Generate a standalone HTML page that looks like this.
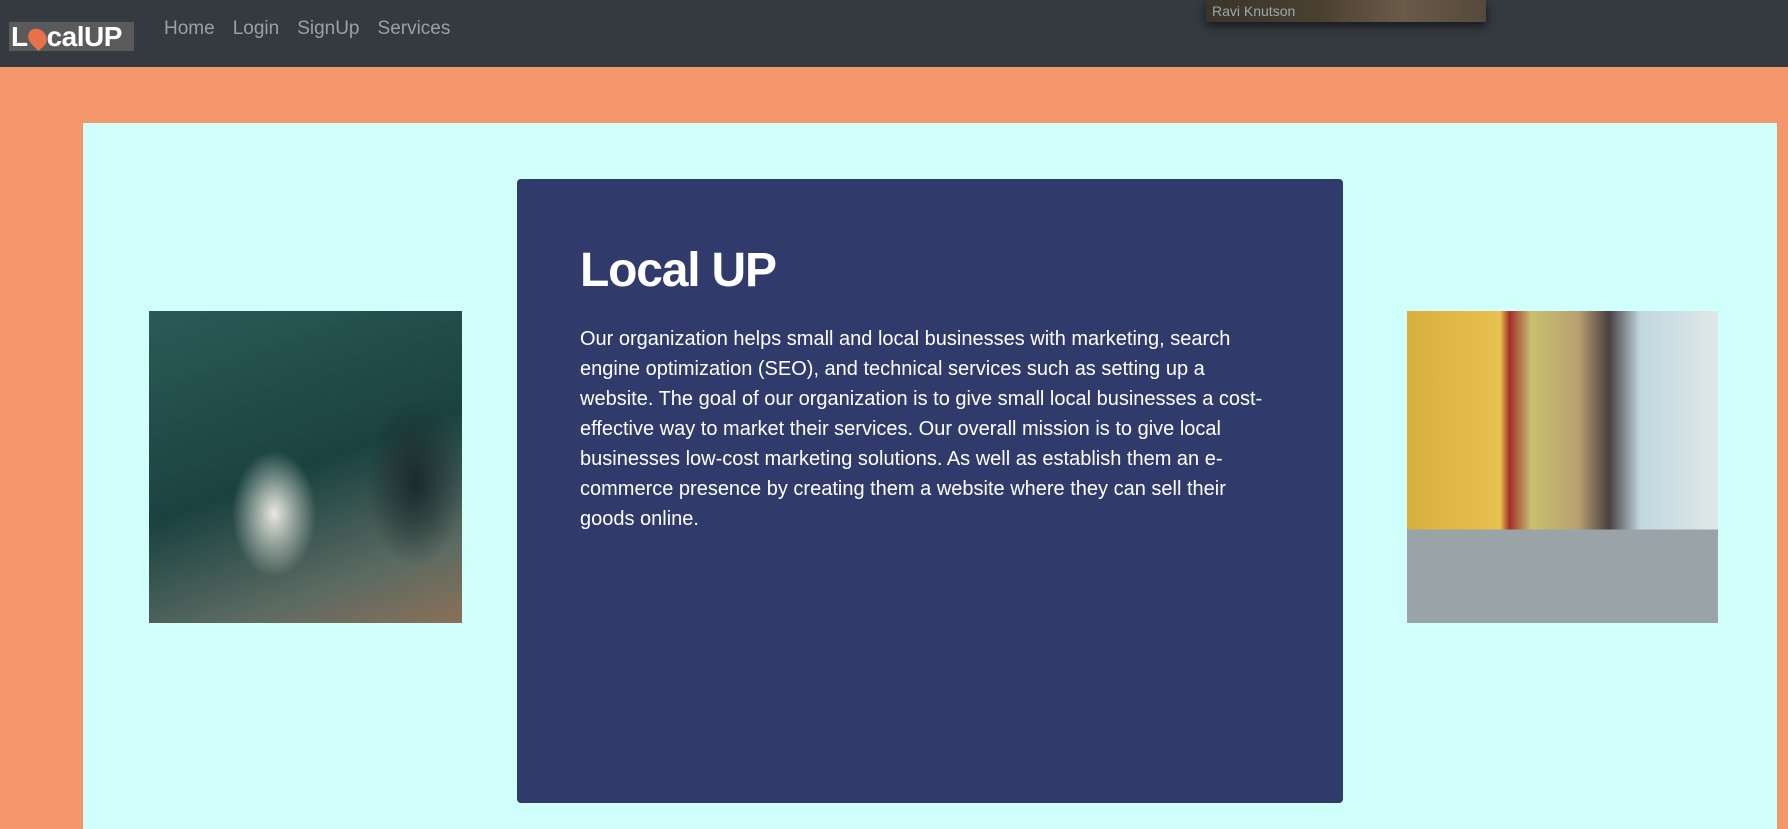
<!DOCTYPE html>
<html><head><meta charset="utf-8"><style>
*{margin:0;padding:0;box-sizing:border-box}
html,body{width:1788px;height:829px;overflow:hidden;background:#f4976c;font-family:"Liberation Sans",sans-serif}
.nav{position:absolute;left:0;top:0;width:1788px;height:67px;background:#343a40}
.logo{position:absolute;left:9px;top:22px;width:125px;height:29px;background:#5a5a5a;color:#fff;font-weight:bold;font-size:28px;line-height:29px;padding-left:2px;letter-spacing:-0.5px}
.logo .o{display:inline-block;width:17px;height:20px;background:#e8704a;border-radius:50% 50% 50% 0;transform:rotate(-45deg);vertical-align:-2px;margin:0 1px}
.links{position:absolute;left:164px;top:18px;font-size:19px;color:#9aa0a6}
.links span{margin-right:18px}
.ov{position:absolute;left:1206px;top:0;width:280px;height:22px;background:linear-gradient(90deg,#3a342c,#4a4030 40%,#6b5a48 70%,#544a3c);box-shadow:0 4px 10px rgba(0,0,0,.6);color:#9aa;font-size:14px;padding-left:6px;line-height:22px}
.main{position:absolute;left:83px;top:123px;width:1694px;height:706px;background:#d1fffc}
.card{position:absolute;left:517px;top:179px;width:826px;height:624px;background:#313b6b;border-radius:4px}
h1{position:absolute;left:580px;top:243px;color:#fff;font-size:48px;font-weight:bold;letter-spacing:-1.2px}
p{position:absolute;left:580px;top:324px;color:#fff;font-size:20px;line-height:30px;white-space:nowrap}
.img1{position:absolute;left:149px;top:311px;width:313px;height:312px;background:
radial-gradient(ellipse 60px 90px at 40% 65%,#e8e8e0,transparent 70%),
radial-gradient(ellipse 70px 120px at 85% 55%,#1c2a2c,transparent 70%),
linear-gradient(160deg,#2c5a58,#1a4240 50%,#5b6a62 80%,#8a7058)}
.img2{position:absolute;left:1407px;top:311px;width:311px;height:312px;background:
linear-gradient(180deg,transparent 0,transparent 70%,#9aa4a8 70%),
linear-gradient(90deg,#d8b040 0,#e8c050 30%,#a03028 33%,#c8c070 40%,#b8a070 55%,#4a4040 65%,#c0d8e0 75%,#e0e8e8 100%)}
</style></head><body>
<div class="nav">
<div class="logo">L<span class="o"></span>calUP</div>
<div class="links"><span>Home</span><span>Login</span><span>SignUp</span><span>Services</span></div>
<div class="ov">Ravi Knutson</div>
</div>
<div class="main"></div>
<div class="img1"></div>
<div class="img2"></div>
<div class="card"></div>
<h1>Local UP</h1>
<p>Our organization helps small and local businesses with marketing, search<br>engine optimization (SEO), and technical services such as setting up a<br>website. The goal of our organization is to give small local businesses a cost-<br>effective way to market their services. Our overall mission is to give local<br>businesses low-cost marketing solutions. As well as establish them an e-<br>commerce presence by creating them a website where they can sell their<br>goods online.</p>
</body></html>
